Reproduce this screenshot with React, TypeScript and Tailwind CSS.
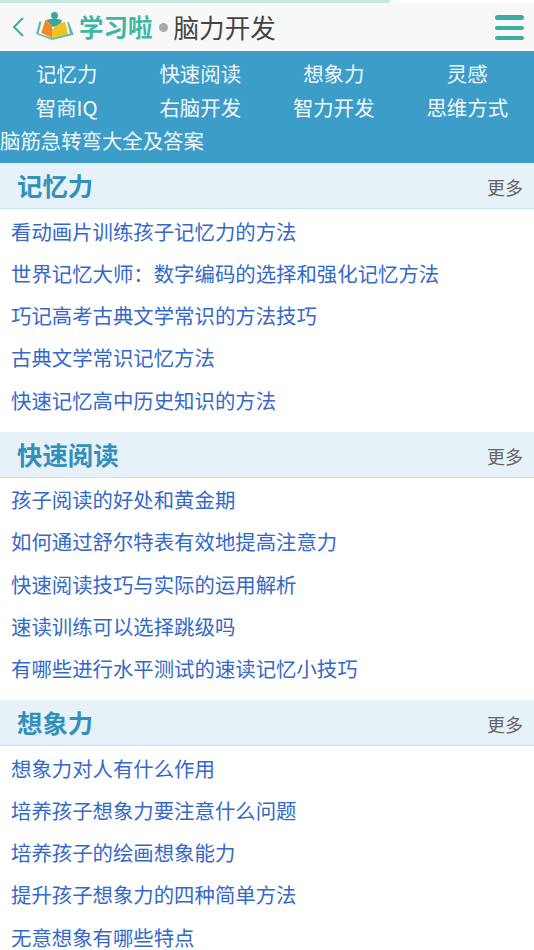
const navItems = ['记忆力', '快速阅读', '想象力', '灵感', '智商IQ', '右脑开发', '智力开发', '思维方式'];

const sections = [
  {
    title: '记忆力',
    links: [
      '看动画片训练孩子记忆力的方法',
      '世界记忆大师：数字编码的选择和强化记忆方法',
      '巧记高考古典文学常识的方法技巧',
      '古典文学常识记忆方法',
      '快速记忆高中历史知识的方法',
    ],
  },
  {
    title: '快速阅读',
    links: [
      '孩子阅读的好处和黄金期',
      '如何通过舒尔特表有效地提高注意力',
      '快速阅读技巧与实际的运用解析',
      '速读训练可以选择跳级吗',
      '有哪些进行水平测试的速读记忆小技巧',
    ],
  },
  {
    title: '想象力',
    links: [
      '想象力对人有什么作用',
      '培养孩子想象力要注意什么问题',
      '培养孩子的绘画想象能力',
      '提升孩子想象力的四种简单方法',
      '无意想象有哪些特点',
    ],
  },
];

function Logo() {
  return (
    <svg width="40" height="30" viewBox="0 0 40 30" className="shrink-0">
      <circle cx="19.5" cy="3.5" r="3.5" fill="#3aa89a" />
      <path d="M11 8 Q19 5 27 8 L25 13 L18 15 Z" fill="#3aa89a" />
      <path d="M10.3 7.7 L17 12.7 L17 26 L6.3 21 Z" fill="#f08a24" />
      <path d="M17 17.7 Q23 11 30.3 10 L33 22 L17 26 Z" fill="#f2c21e" />
      <path d="M4.3 9.3 L6.5 10 L3.5 21.5 L17 26 L17 28 L1 22 Z" fill="#5fbcad" />
      <path d="M32 10 L34 10.5 L38.7 22.7 L17 28 L17 26 L35 21.5 Z" fill="#5fbcad" />
    </svg>
  );
}

export default function App() {
  return (
    <div className="w-[534px] h-[950px] overflow-hidden bg-white font-['Noto_Sans_CJK_SC','Liberation_Sans',sans-serif]">
      <div className="h-[3px] w-[390px] bg-[#c5e8e0]" />
      <header className="h-[48px] bg-[#f8f8f8] flex items-center pl-[12px] pr-[10px]">
        <svg width="14" height="24" viewBox="0 0 14 24" className="shrink-0">
          <path d="M11 3 L2 12 L11 21" fill="none" stroke="#3aaf9f" strokeWidth="2" />
        </svg>
        <div className="ml-[9px]">
          <Logo />
        </div>
        <span className="ml-[4px] text-[24.5px] leading-none font-bold text-[#3fb5a3]">学习啦</span>
        <span className="ml-[6px] w-[9px] h-[9px] rounded-full bg-[#a8a8a8]" />
        <span className="ml-[6px] text-[25.6px] leading-none text-[#444444]">脑力开发</span>
        <div className="ml-auto w-[29px] flex flex-col gap-[6px]">
          <div className="h-[5px] rounded-full bg-[#3aaf9f]" />
          <div className="h-[4px] rounded-full bg-[#3aaf9f]" />
          <div className="h-[4px] rounded-full bg-[#3aaf9f]" />
        </div>
      </header>
      <nav className="h-[112px] bg-[#3c9dc9] text-[#f2f8fb] text-[20.4px]">
        <div className="grid grid-cols-4 pt-[6px]">
          {navItems.map((item) => (
            <a key={item} className="h-[33.5px] leading-[33.5px] text-center">
              {item}
            </a>
          ))}
        </div>
        <a className="block h-[33.5px] leading-[33.5px]">脑筋急转弯大全及答案</a>
      </nav>
      {sections.map((section) => (
        <section key={section.title}>
          <div className="h-[46px] bg-[#e6f2f8] border-b border-[#c5e4f2] flex items-center justify-between pl-[17px] pr-[11px]">
            <h2 className="mt-[1px] text-[25.4px] leading-none font-bold text-[#3390bb]">{section.title}</h2>
            <a className="mt-[3px] text-[18px] leading-none text-[#666666]">更多</a>
          </div>
          <ul className="pb-[11.25px]">
            {section.links.map((link) => (
              <li key={link} className="h-[42.25px] pt-[2.5px] leading-[38px] pl-[11px] text-[20.4px] text-[#3468c9] whitespace-nowrap">
                {link}
              </li>
            ))}
          </ul>
        </section>
      ))}
    </div>
  );
}
